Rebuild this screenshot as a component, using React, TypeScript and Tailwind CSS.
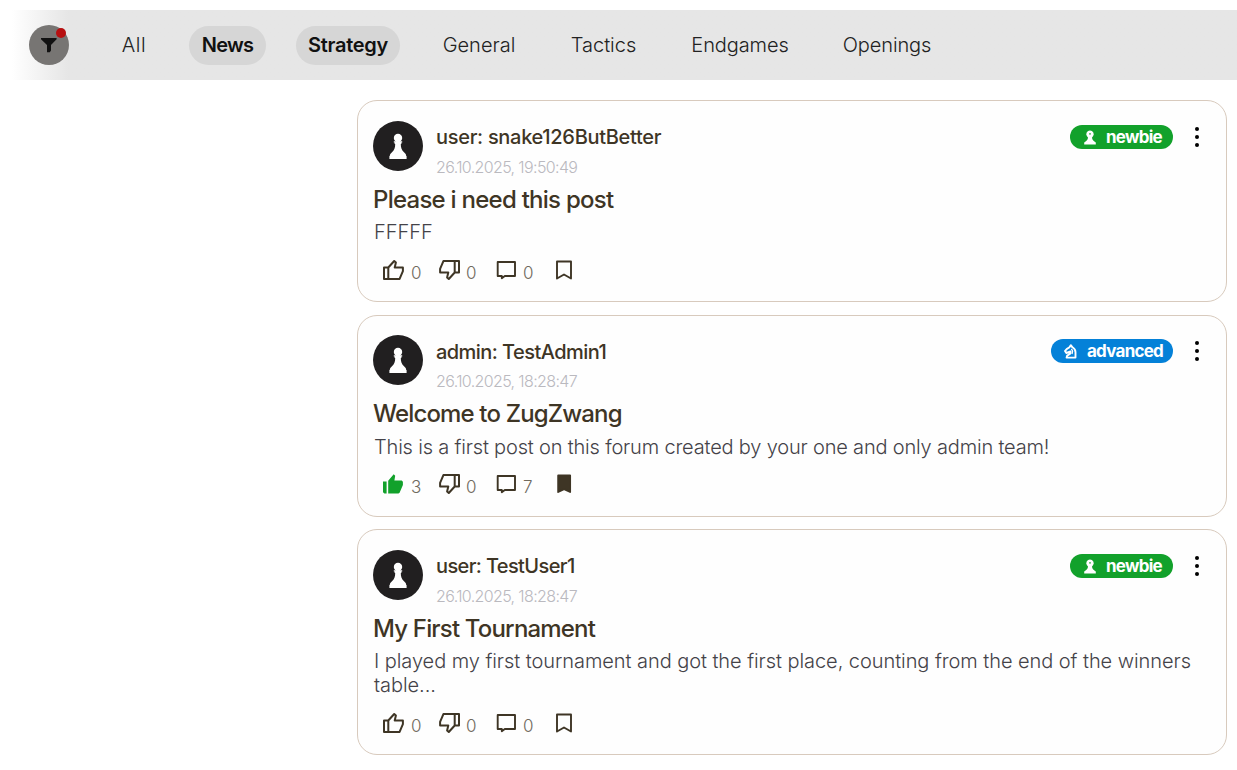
import React from "react";

type Level = "newbie" | "advanced";

interface Post {
  author: string;
  authorClass: string;
  date: string;
  title: string;
  titleClass: string;
  body: string;
  bodyClass: string;
  footerClass: string;
  level: Level;
  likes: number;
  dislikes: number;
  comments: number;
  liked?: boolean;
  saved?: boolean;
  cardClass: string;
}

const tabs = [
  { label: "All", className: "w-[50px] tracking-[0.6px]" },
  { label: "News", className: "w-[77px] tracking-[-0.8px]", active: true },
  { label: "Strategy", className: "w-[104px] tracking-[-0.3px]", active: true },
  { label: "General", className: "w-[98px]" },
  { label: "Tactics", className: "w-[91px]" },
  { label: "Endgames", className: "w-[122px] tracking-[-0.1px]" },
  { label: "Openings", className: "w-[113px] pr-px tracking-[-0.1px]" },
];

const posts: Post[] = [
  {
    author: "user: snake126ButBetter",
    authorClass: "pt-1 tracking-[-0.3px]",
    date: "26.10.2025, 19:50:49",
    title: "Please i need this post",
    titleClass: "tracking-[-0.75px]",
    body: "FFFFF",
    bodyClass: "mt-[6px] tracking-[0px]",
    footerClass: "mt-[14px]",
    level: "newbie",
    likes: 0,
    dislikes: 0,
    comments: 0,
    cardClass: "h-[202px] pt-[20px]",
  },
  {
    author: "admin: TestAdmin1",
    authorClass: "pt-[5px] -mb-px tracking-[-0.55px]",
    date: "26.10.2025, 18:28:47",
    title: "Welcome to ZugZwang",
    titleClass: "tracking-[-0.85px]",
    body: "This is a first post on this forum created by your one and only admin team!",
    bodyClass: "mt-[7px] tracking-[-0.18px]",
    footerClass: "mt-[13px]",
    level: "advanced",
    likes: 3,
    dislikes: 0,
    comments: 7,
    liked: true,
    saved: true,
    cardClass: "h-[202px] pt-[19px]",
  },
  {
    author: "user: TestUser1",
    authorClass: "pt-1 tracking-[-0.62px]",
    date: "26.10.2025, 18:28:47",
    title: "My First Tournament",
    titleClass: "tracking-[-0.82px]",
    body: "I played my first tournament and got the first place, counting from the end of the winners table...",
    bodyClass: "mt-[6px] tracking-[-0.06px]",
    footerClass: "mt-[14px]",
    level: "newbie",
    likes: 0,
    dislikes: 0,
    comments: 0,
    cardClass: "-mt-px h-[226px] pt-[20px]",
  },
];

const Pawn = ({ className }: { className: string }) => (
  <svg viewBox="0 0 18 27" className={className} fill="currentColor">
    <circle cx="9" cy="5" r="4.2" />
    <path d="M4.800 8.200h8.400v1.300h-.8v1.500h-.6c0 3.600.7 6 3.200 8.200 1.500 1.300 2.200 2.400 2.200 3.900h.4v3H.4v-3h.4c0-1.500.7-2.600 2.200-3.900 2.500-2.200 3.200-4.600 3.200-8.200h-.6V9.500h-.8z" />
  </svg>
);

const BadgePawn = () => (
  <svg viewBox="0 0 12 15" className="h-[15px] w-[12px]" fill="currentColor">
    <path d="M6 .4a3.700 3.700 0 0 1 3 5.900L8 7.400c.2 1.700.9 2.800 2.100 3.900l1.700 1.200V14.500H.2v-2l1.700-1.200C3.100 10.200 3.800 9.100 4 7.400L3 6.300A3.700 3.700 0 0 1 6 .4zM6 3.100a.8.800 0 0 0 0 1.600.8.800 0 0 0 0-1.600z" fillRule="evenodd" />
  </svg>
);

const BadgeKnight = () => (
  <svg viewBox="0 0 14 15" className="h-[15px] w-[14px]" fill="none" stroke="currentColor" strokeWidth="1.900" strokeLinejoin="round">
    <path d="M3.600 13.600h8.900V8.200c0-2-1.200-3.800-3-4.900L7.800 1.200 6.300 3.400C4.500 4.200 3 5.400 2 7l1.300 2 4.200-1.500-.3 2.200-3 1.900z" />
    <path d="M8.400 4.900 9.600 7 9 10" strokeWidth="1.300" />
  </svg>
);

const Thumb = ({ down, filled }: { down?: boolean; filled?: boolean }) => (
  <svg
    viewBox="0 0 24 24"
    className={down ? "h-6 w-6 rotate-180" : filled ? "h-6 w-6 text-[#12a12b]" : "h-6 w-6"}
    fill="none"
    stroke="currentColor"
    strokeWidth="2"
    strokeLinejoin="round"
  >
    {filled ? (
      <path d="M1 9.500h3.600v12H2.400L1 20.300zM6.200 8.800 11.700 2.200l1.500 1.500-.8 4.800h7.300l1.200 1.200v3.200l-3.300 7.800-1.200.8H6.200z" fill="currentColor" stroke="none" />
    ) : (
      <path d="M2 9.500h4.300v11.400H2zM6.300 9.500l5.900-6.500L13.900 4.600l-1.200 4.900h8.200v3.600l-3.300 7.800H6.300" />
    )}
  </svg>
);

const Comment = () => (
  <svg viewBox="0 0 24 24" className="h-6 w-6" fill="none" stroke="currentColor" strokeWidth="1.900" strokeLinejoin="round">
    <path d="M3.700 4h17.300v14H10.800l-3 2.200V18H3.700z" />
  </svg>
);

const Bookmark = ({ filled }: { filled?: boolean }) => (
  <svg viewBox="0 0 24 24" className="h-6 w-6" fill={filled ? "currentColor" : "none"} stroke="currentColor" strokeWidth="1.900" strokeLinejoin="round">
    <path d={filled ? "M6.200 3.400h11.900v16.600l-6-2.800-5.900 2.800z" : "M5 3.500h14v17l-7-4-7 4z"} />
  </svg>
);

const Count = ({ value }: { value: number }) => (
  <span className="ml-[5px] w-[11px] pt-[3px] text-[17px] leading-6 font-[350] text-[#706a5e]">{value}</span>
);

const Badge = ({ level }: { level: Level }) => (
  <div
    className={
      level === "newbie"
        ? "flex h-6 w-[103px] items-center rounded-full bg-[#12a12b] pl-[14px] text-white"
        : "flex h-6 w-[122px] items-center rounded-full bg-[#0481d8] pl-[12px] text-white"
    }
  >
    {level === "newbie" ? <BadgePawn /> : <BadgeKnight />}
    <span className="ml-[10px] text-[17px] leading-6 font-bold tracking-[-0.75px]">{level}</span>
  </div>
);

const PostCard = ({ post }: { post: Post }) => (
  <article className={`rounded-[20px] border border-[#d8cabd] bg-[#fefefe] px-[15px] text-[#3e3525] ${post.cardClass}`}>
    <header className="flex h-[53px] items-start">
      <div className="flex h-[50px] w-[50px] shrink-0 items-center justify-center rounded-full bg-[#211f20] text-white">
        <Pawn className="h-[27px] w-[18px]" />
      </div>
      <div className="ml-[13px] flex-1 whitespace-nowrap">
        <div className={`text-[20px] leading-6 font-[550] ${post.authorClass}`}>{post.author}</div>
        <time className="mt-[8px] block text-[16px] leading-5 font-[350] tracking-[-0.63px] text-[#bab9bf]">{post.date}</time>
      </div>
      <div className="flex items-center pt-1">
        <Badge level={post.level} />
        <button aria-label="Post options" className="mr-[10px] ml-[21px] flex h-6 w-[7px] flex-col items-center justify-center gap-1 pr-px text-black">
          <span className="h-1 w-1 rounded-full bg-current" />
          <span className="h-1 w-1 rounded-full bg-current" />
          <span className="h-1 w-1 rounded-full bg-current" />
        </button>
      </div>
    </header>
    <h2 className={`mt-[12px] text-[24px] leading-[28px] font-[550] whitespace-nowrap ${post.titleClass}`}>{post.title}</h2>
    <p className={`pl-px text-[20px] leading-6 font-[350] text-[#444248] ${post.bodyClass}`}>{post.body}</p>
    <footer className={`flex h-6 items-start pl-[9px] ${post.footerClass}`}>
      <div className="flex w-[55px]"><Thumb filled={post.liked} /><Count value={post.likes} /></div>
      <div className="flex w-[57px]"><Thumb down /><Count value={post.dislikes} /></div>
      <div className="flex w-[58px]"><Comment /><Count value={post.comments} /></div>
      <Bookmark filled={post.saved} />
    </footer>
  </article>
);

export default function App() {
  return (
    <div className="min-h-[770px] overflow-hidden bg-white font-['Inter',sans-serif]">
      <nav className="mt-[10px] ml-[12px] flex h-[70px] items-center bg-linear-to-r from-white via-[#e6e6e6] via-[56px] to-[#e6e6e6] pl-[17px]">
        <button aria-label="Filters" className="relative flex h-10 w-10 items-center justify-center rounded-full bg-[#777573]">
          <svg viewBox="0 0 16 16" className="h-4 w-4" fill="#111">
            <path d="M0 1h15.600v1.200L10 8v5.600L8.800 15.200H6V8L0 2.200z" />
          </svg>
          <span className="absolute top-[3px] right-[3px] h-[10px] w-[10px] rounded-full bg-[#b70f10]" />
        </button>
        <div className="ml-[40px] flex gap-[30px]">
          {tabs.map((tab) => (
            <button
              key={tab.label}
              className={`${tab.className} flex h-[39px] items-center justify-center rounded-full text-[20px] whitespace-nowrap ${
                tab.active ? "bg-[#d6d6d6] font-semibold text-[#111]" : "font-[350] text-[#222]"
              }`}
            >
              {tab.label}
            </button>
          ))}
        </div>
      </nav>
      <main className="mt-[20px] mr-[10px] ml-[357px] flex flex-col gap-[13px]">
        {posts.map((post) => (
          <PostCard key={post.title} post={post} />
        ))}
      </main>
    </div>
  );
}
